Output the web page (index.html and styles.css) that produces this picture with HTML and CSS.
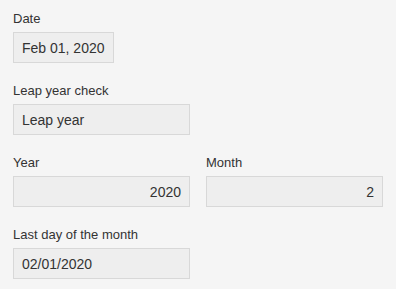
FILE: index.html
```html
<!DOCTYPE html>
<html>
<head>
<meta charset="utf-8">
<link rel="stylesheet" href="styles.css">
</head>
<body>
<div class="form">
  <div class="row">
    <div class="field">
      <div class="label">Date</div>
      <div class="value auto">Feb 01, 2020</div>
    </div>
  </div>
  <div class="row">
    <div class="field">
      <div class="label">Leap year check</div>
      <div class="value">Leap year</div>
    </div>
  </div>
  <div class="row">
    <div class="field">
      <div class="label">Year</div>
      <div class="value num">2020</div>
    </div>
    <div class="field">
      <div class="label">Month</div>
      <div class="value num">2</div>
    </div>
  </div>
  <div class="row">
    <div class="field">
      <div class="label">Last day of the month</div>
      <div class="value">02/01/2020</div>
    </div>
  </div>
</div>
</body>
</html>
```
FILE: styles.css
```css
html, body {
  margin: 0;
  padding: 0;
  background: #f5f5f5;
}
body {
  font-family: "Liberation Sans", Arial, sans-serif;
  color: #333333;
}
.form {
  padding: 10px 0 0 13px;
  display: flex;
  flex-direction: column;
  gap: 19px;
}
.row {
  display: flex;
  gap: 16px;
}
.field {
  display: flex;
  flex-direction: column;
  align-items: flex-start;
}
.label {
  font-size: 13px;
  line-height: 17px;
  margin-bottom: 5px;
  white-space: nowrap;
}
.value {
  box-sizing: border-box;
  width: 177px;
  height: 31px;
  line-height: 28px;
  border: 1px solid #d8d8d8;
  background: #eeeeee;
  font-size: 14px;
  padding: 1px 8px 0;
  white-space: nowrap;
  overflow: hidden;
}
.value.auto {
  width: auto;
}
.value.num {
  text-align: right;
}
```
